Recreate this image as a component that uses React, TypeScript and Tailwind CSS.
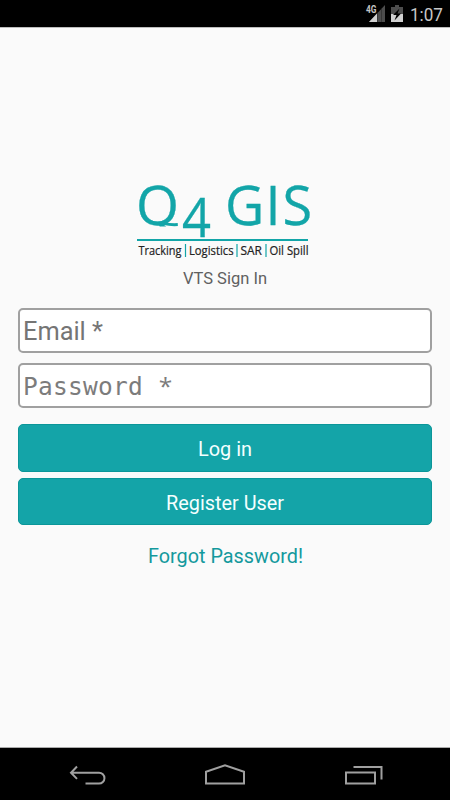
function StatusBar() {
  return (
    <header className="h-[27px] shrink-0 bg-black">
      <svg width="450" height="27" viewBox="0 0 450 27" fontFamily="Roboto, sans-serif">
        <text x="366" y="13" fontSize="10.5" fontWeight="700" fill="#c4c4c4" textLength="10.5" lengthAdjust="spacingAndGlyphs">4G</text>
        <path d="M385 5V22H369Z" fill="#4d4d4d" />
        <path d="M377 13.5V22H369Z" fill="#d0d0d0" />
        <path d="M377.5 12V22M381.5 8V22" stroke="#222" strokeWidth=".5" />
        <path d="M391 7h4V5h4v2h4v7h-12z" fill="#4d4d4d" />
        <path d="M391 14h12v8h-12z" fill="#d0d0d0" />
        <path d="M399.5 8.5L393 15h3.5l-2 5.5L401 13.5h-3.5z" fill="#000" />
        <text x="410" y="20.5" fontSize="18.5" fill="#c8c8c8" textLength="33" lengthAdjust="spacingAndGlyphs">1:07</text>
      </svg>
    </header>
  );
}

function Logo() {
  return (
    <svg className="h-[98px] w-[190px]" viewBox="130 162 190 98" fontFamily="'Open Sans', 'Noto Sans', sans-serif">
      <clipPath id="bowl"><path d="M130 162h60v64.4h-60z" /></clipPath>
      <g fill="#12a5a8" stroke="#12a5a8" strokeWidth=".3">
        <g clipPath="url(#bowl)">
          <text x="136" y="225" fontSize="54" textLength="43" lengthAdjust="spacingAndGlyphs">Q</text>
        </g>
        <path d="M164 223.6Q170 225 177.8 224.6" fill="none" strokeWidth="3" />
        <text x="182" y="237" fontSize="54" textLength="29" lengthAdjust="spacingAndGlyphs">4</text>
        <text x="225 265.5 282.5" y="225" fontSize="54">GIS</text>
        <path d="M137 239h171v2H137z" stroke="none" />
      </g>
      <g fontSize="12" fill="#222" stroke="#222" strokeWidth=".2">
        <text x="138.5" y="254.5" textLength="43" lengthAdjust="spacingAndGlyphs">Tracking</text>
        <text x="189" y="254.5" textLength="44.5" lengthAdjust="spacingAndGlyphs">Logistics</text>
        <text x="240.5" y="254.5" textLength="21.5" lengthAdjust="spacingAndGlyphs">SAR</text>
        <text x="269.5" y="254.5" textLength="39" lengthAdjust="spacingAndGlyphs">Oil Spill</text>
      </g>
      <path d="M185.5 244v13M237 244v13M266 244v13" stroke="#12a5a8" strokeWidth="1.2" />
    </svg>
  );
}

function NavigationBar() {
  return (
    <nav className="mt-auto h-[53px] shrink-0 border-t border-[#aaa] bg-black">
      <svg width="450" height="52" viewBox="0 748 450 52" fill="none" stroke="#a0a0a0" strokeWidth="2">
        <path d="M70.5 772.7H99a5.4 5.4 0 0 1 0 10.9H85.5M77 766.5l-6 6.2 6 6.2" />
        <path d="M206 783.5v-11.7l19-6.4 19 6.4v11.7z" />
        <path d="M346 772.5h29v11h-29zM353.5 767h28v12.5" />
      </svg>
    </nav>
  );
}

export default function App() {
  return (
    <div className="flex h-[800px] w-[450px] flex-col overflow-hidden bg-[#fafafa] font-['Roboto',sans-serif]">
      <StatusBar />
      <div className="h-px shrink-0 bg-[#bdbdbd]" />
      <main className="flex flex-col px-[18px] pt-[134px]">
        <div className="flex justify-center"><Logo /></div>
        <h1 className="mt-[8px] text-center text-base leading-5 text-[#606060]">
          <svg className="mx-auto h-5 w-[86px]" viewBox="0 0 86 20">
            <text x="1" y="16" fontSize="16" fill="#606060" textLength="84" lengthAdjust="spacingAndGlyphs">VTS Sign In</text>
          </svg>
        </h1>
        <div className="mt-5 h-[45px] rounded-[5px] border-2 border-[#a0a0a0] bg-white">
          <svg width="410" height="41" viewBox="0 0 410 41">
            <text x="3" y="30" fontSize="26" fill="#757575" textLength="80" lengthAdjust="spacingAndGlyphs">Email *</text>
          </svg>
        </div>
        <div className="mt-[10px] h-[45px] rounded-[5px] border-2 border-[#a0a0a0] bg-white">
          <svg width="410" height="41" viewBox="0 0 410 41">
            <text x="10.5 25.5 40.5 55.5 70.5 85.5 100.5 115.5 130.5 145.5" y="30" fontSize="24.5" fill="#7c7c7c" textAnchor="middle" fontFamily="'DejaVu Sans Mono', monospace">
              Password <tspan fontFamily="'Open Sans', sans-serif">*</tspan>
            </text>
          </svg>
        </div>
        <button className="mt-4 h-12 rounded-[5px] border border-[#0b9699] bg-[#14a4a8]">
          <svg width="412" height="46" viewBox="0 0 412 46">
            <text x="179" y="31" fontSize="20" fill="#f4ffff" textLength="54" lengthAdjust="spacingAndGlyphs">Log in</text>
          </svg>
        </button>
        <button className="mt-[5.5px] h-[47.5px] rounded-[5px] border border-[#0b9699] bg-[#14a4a8]">
          <svg width="412" height="46" viewBox="0 0 412 46">
            <text x="147" y="30.5" fontSize="20" fill="#f4ffff" textLength="118" lengthAdjust="spacingAndGlyphs">Register User</text>
          </svg>
        </button>
        <a className="mt-[17px] flex h-7 justify-center">
          <svg width="158" height="28" viewBox="146 542 158 28">
            <text x="148" y="562.6" fontSize="20" fill="#14999d" textLength="155" lengthAdjust="spacingAndGlyphs">Forgot Password!</text>
          </svg>
        </a>
      </main>
      <NavigationBar />
    </div>
  );
}
